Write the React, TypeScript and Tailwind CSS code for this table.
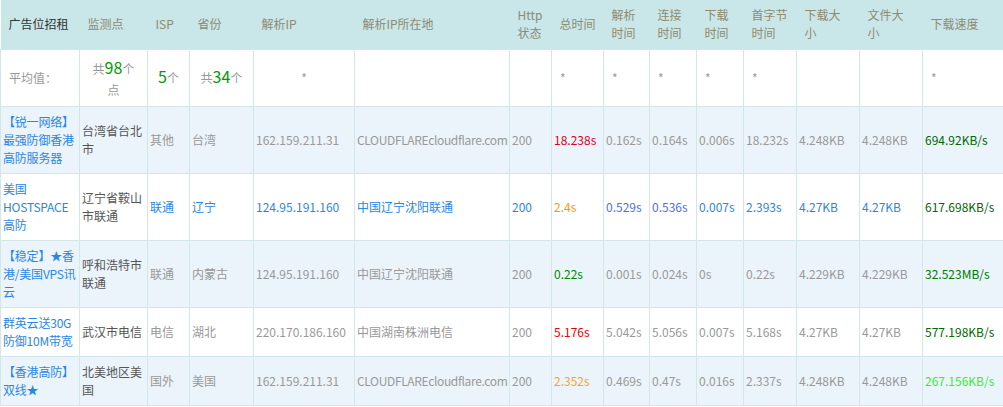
import React from "react";

type Row = {
    name: string[];
    point: string;
    isp: string;
    prov: string;
    ip: string;
    loc: string;
    code: string;
    total: string;
    totalColor: string;
    dns: string;
    conn: string;
    down: string;
    first: string;
    dsize: string;
    fsize: string;
    speed: string;
    speedColor: string;
    blue?: boolean;
    alt?: boolean;
};

const rows: Row[] = [
    { name: ["【锐一网络】", "最强防御香港", "高防服务器"], point: "台湾省台北市", isp: "其他", prov: "台湾", ip: "162.159.211.31", loc: "CLOUDFLAREcloudflare.com", code: "200", total: "18.238s", totalColor: "text-[#dd0022]", dns: "0.162s", conn: "0.164s", down: "0.006s", first: "18.232s", dsize: "4.248KB", fsize: "4.248KB", speed: "694.92KB/s", speedColor: "text-[#006600]", alt: true },
    { name: ["美国", "HOSTSPACE", "高防"], point: "辽宁省鞍山市联通", isp: "联通", prov: "辽宁", ip: "124.95.191.160", loc: "中国辽宁沈阳联通", code: "200", total: "2.4s", totalColor: "text-[#ff9900]", dns: "0.529s", conn: "0.536s", down: "0.007s", first: "2.393s", dsize: "4.27KB", fsize: "4.27KB", speed: "617.698KB/s", speedColor: "text-[#006600]", blue: true },
    { name: ["【稳定】★香", "港/美国VPS讯", "云"], point: "呼和浩特市联通", isp: "联通", prov: "内蒙古", ip: "124.95.191.160", loc: "中国辽宁沈阳联通", code: "200", total: "0.22s", totalColor: "text-[#008800]", dns: "0.001s", conn: "0.024s", down: "0s", first: "0.22s", dsize: "4.229KB", fsize: "4.229KB", speed: "32.523MB/s", speedColor: "text-[#007700]", alt: true },
    { name: ["群英云送30G", "防御10M带宽"], point: "武汉市电信", isp: "电信", prov: "湖北", ip: "220.170.186.160", loc: "中国湖南株洲电信", code: "200", total: "5.176s", totalColor: "text-[#ee0000]", dns: "5.042s", conn: "5.056s", down: "0.007s", first: "5.168s", dsize: "4.27KB", fsize: "4.27KB", speed: "577.198KB/s", speedColor: "text-[#006600]" },
    { name: ["【香港高防】", "双线★"], point: "北美地区美国", isp: "国外", prov: "美国", ip: "162.159.211.31", loc: "CLOUDFLAREcloudflare.com", code: "200", total: "2.352s", totalColor: "text-[#ffa31a]", dns: "0.469s", conn: "0.47s", down: "0.016s", first: "2.337s", dsize: "4.248KB", fsize: "4.248KB", speed: "267.156KB/s", speedColor: "text-[#33ee33]", alt: true },
];

const widths = [79, 68, 42, 64, 101, 155, 42, 52, 46, 47, 47, 53, 63, 63, 81];

const headers: React.ReactNode[] = [
    "广告位招租",
    "监测点",
    "ISP",
    "省份",
    "解析IP",
    "解析IP所在地",
    <>Http<br />状态</>,
    "总时间",
    <>解析<br />时间</>,
    <>连接<br />时间</>,
    <>下载<br />时间</>,
    <>首字节<br />时间</>,
    <>下载大<br />小</>,
    <>文件大<br />小</>,
    "下载速度",
];

const td = "border border-[#d2e8e8] px-[2px] py-[6px] align-middle";
const avg = "border border-[#d2e8e8] px-2 py-[7px] align-middle text-[#999]";

const App = () => {
    return (
        <div className="w-[1003px] h-[407px] overflow-hidden bg-white text-[12px] leading-[18px] font-['Noto_Sans_CJK_SC',sans-serif]">
            <table className="table-fixed border-collapse w-[1003px]">
                <colgroup>
                    {widths.map((w, i) => <col key={i} style={{ width: w }} />)}
                </colgroup>
                <thead>
                    <tr className="h-[49px] bg-[#c9e6e9]">
                        {headers.map((h, i) => (
                            <th
                                key={i}
                                className={`pl-2 pr-0 text-left font-normal whitespace-nowrap align-middle border-b border-[#d2e8e8] ${i === 0 ? "text-[#333]" : "text-[#8e8b6f]"}`}>
                                {h}
                            </th>
                        ))}
                    </tr>
                </thead>
                <tbody>
                    <tr>
                        <td className={avg}>平均值：</td>
                        <td className={`${avg} text-center`}>
                            <div className="leading-[24px]">共<span className="text-[16px] leading-none text-[#009900]">98</span>个</div>
                            <div>点</div>
                        </td>
                        <td className={`${avg} text-center`}><span className="text-[16px] leading-none text-[#009900]">5</span>个</td>
                        <td className={`${avg} text-center`}>共<span className="text-[16px] leading-none text-[#009900]">34</span>个</td>
                        <td className={`${avg} text-center`}>*</td>
                        <td className={avg}></td>
                        <td className={avg}></td>
                        <td className={avg}>*</td>
                        <td className={avg}>*</td>
                        <td className={avg}>*</td>
                        <td className={avg}>*</td>
                        <td className={avg}>*</td>
                        <td className={avg}></td>
                        <td className={avg}></td>
                        <td className={avg}>*</td>
                    </tr>
                    {rows.map((r) => {
                        const c = r.blue ? "text-[#2a86e6]" : "text-[#999]";
                        const c2 = r.blue ? "text-[#4d6ff2]" : "text-[#999]";
                        const latin = /^[A-Za-z]/.test(r.loc);
                        return (
                            <tr key={r.name.join("")} className={r.alt ? "bg-[#ebf4fb]" : "bg-white"}>
                                <td className={`${td} text-[#2a86e6] whitespace-nowrap`}>
                                    {r.name.map((l, i) => <div key={i} className="tracking-[-0.2px]">{l}</div>)}
                                </td>
                                <td className={`${td} text-[#555]`}>{r.point}</td>
                                <td className={`${td} ${c}`}>{r.isp}</td>
                                <td className={`${td} ${c}`}>{r.prov}</td>
                                <td className={`${td} ${c}`}>{r.ip}</td>
                                <td className={`${td} ${c} whitespace-nowrap ${latin ? "tracking-[-0.35px]" : ""}`}>{r.loc}</td>
                                <td className={`${td} ${c}`}>{r.code}</td>
                                <td className={`${td} ${r.totalColor}`}>{r.total}</td>
                                <td className={`${td} ${c2}`}>{r.dns}</td>
                                <td className={`${td} ${c2}`}>{r.conn}</td>
                                <td className={`${td} ${c}`}>{r.down}</td>
                                <td className={`${td} ${c}`}>{r.first}</td>
                                <td className={`${td} ${c}`}>{r.dsize}</td>
                                <td className={`${td} ${c}`}>{r.fsize}</td>
                                <td className={`${td} ${r.speedColor}`}>{r.speed}</td>
                            </tr>
                        );
                    })}
                </tbody>
            </table>
        </div>
    );
};

export default App;
